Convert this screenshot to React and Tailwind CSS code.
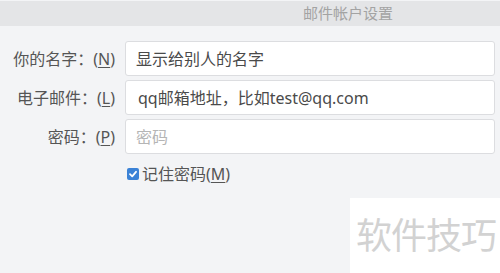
import React from 'react'

const fields = [
  { label: '你的名字：(', key: 'N', value: '显示给别人的名字' },
  { label: '电子邮件：(', key: 'L', value: 'qq邮箱地址，比如test@qq.com', pad: true },
  { label: '密码：(', key: 'P', placeholder: '密码' },
]

export default function App() {
  return (
    <div className="relative w-[500px] h-[273px] overflow-hidden bg-[#f3f4f6] font-['Noto_Sans','Noto_Sans_CJK_SC',sans-serif]">
      <div className="h-px bg-[#f3f4f6]" />
      {/* title bar */}
      <div className="h-[25px] bg-[#e4e5e7] flex items-center justify-end pr-[107px]">
        <span className="text-[15px] text-[#a3a3a3] leading-none">邮件帐户设置</span>
      </div>

      <div className="pt-[15px] pr-[5px] flex flex-col gap-[4px]">
        {fields.map((f) => (
          <div key={f.key} className="flex items-center">
            <label className="w-[116px] text-right text-[16px] text-[#555] pr-[1px] leading-none">
              {f.label}
              <span className="underline underline-offset-2">{f.key}</span>)
            </label>
            <div className="ml-[9px] flex-1 h-[35px] bg-white border border-[#dcdde0] rounded-[3px] flex items-center pl-[10px]">
              {f.value ? (
                <span className={`text-[16px] text-[#4a4a4a] ${f.pad ? 'pl-[2px]' : ''}`}>{f.value}</span>
              ) : (
                <span className="text-[16px] text-[#b5b5b5]">{f.placeholder}</span>
              )}
            </div>
          </div>
        ))}

        <div className="flex items-center pl-[127px] mt-[8px]">
          <span className="w-[12px] h-[12px] rounded-[2px] bg-[#3b82d6] flex items-center justify-center">
            <svg width="10" height="10" viewBox="0 0 10 10">
              <path d="M2 5.2 L4.2 7.3 L8 2.8" stroke="white" strokeWidth="1.8" fill="none" strokeLinecap="round" strokeLinejoin="round" />
            </svg>
          </span>
          <span className="ml-[3px] text-[16px] text-[#555] leading-none">
            记住密码(<span className="underline underline-offset-2">M</span>)
          </span>
        </div>
      </div>

      {/* watermark */}
      <div className="absolute left-[350px] top-[198px] w-[150px] h-[75px] bg-white flex items-center pl-[6px]">
        <span className="text-[36px] text-[#d2d2d2] leading-none tracking-[-1px]">软件技巧</span>
      </div>
    </div>
  )
}
